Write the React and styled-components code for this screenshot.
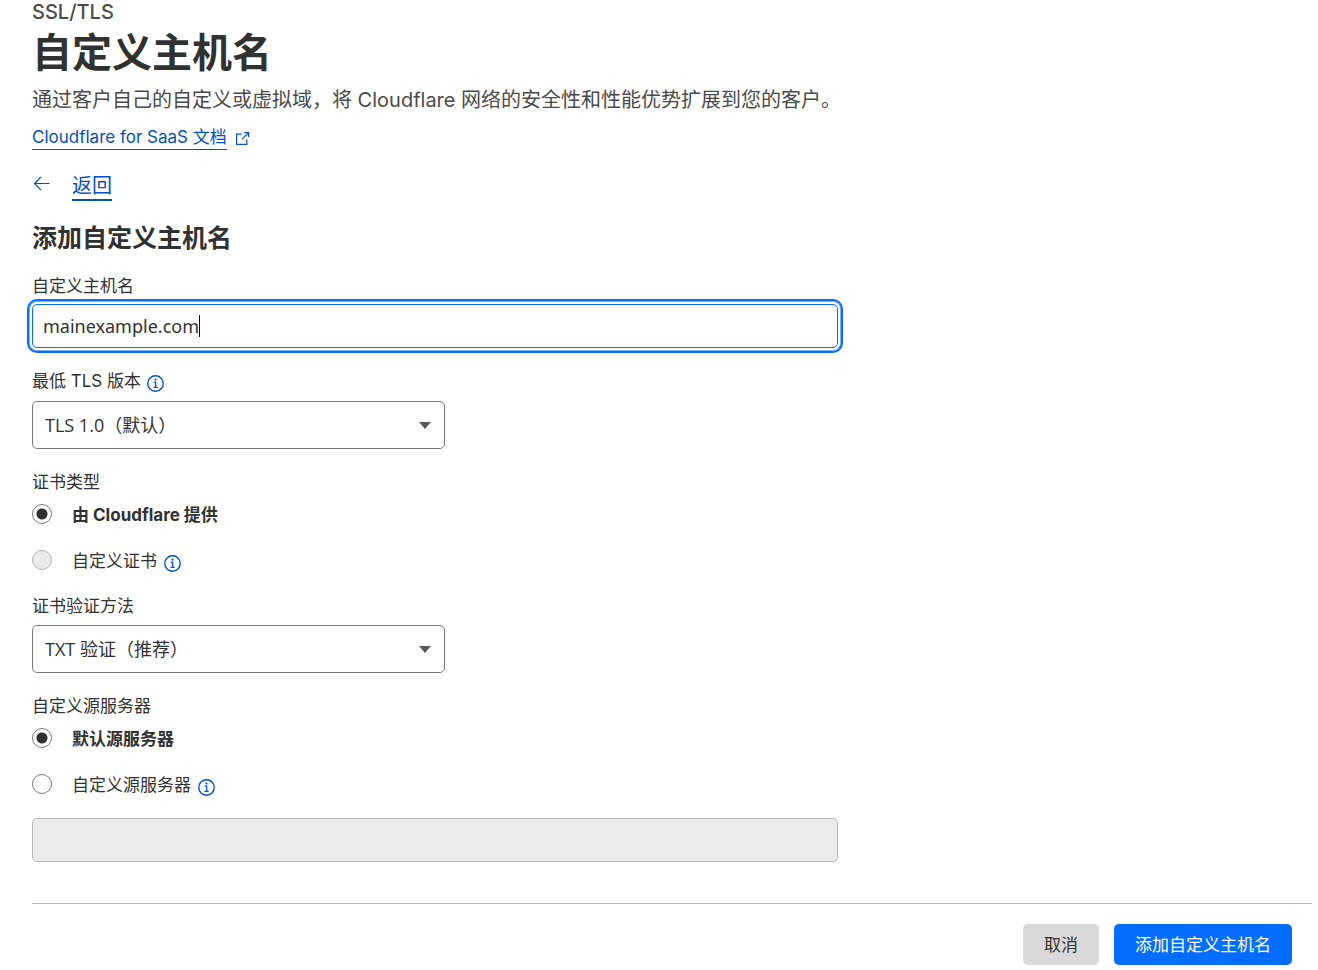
import React, { useState } from 'react';
import styled, { createGlobalStyle } from 'styled-components';

const GlobalStyle = createGlobalStyle`
  *, *::before, *::after {
    box-sizing: border-box;
  }

  body {
    margin: 0;
    background-color: #fff;
    color: #313131;
    font-family: Inter, "Noto Sans CJK SC", sans-serif;
    font-size: 17px;
    line-height: 24px;
  }

  button, input, select {
    font: inherit;
    color: inherit;
  }
`;

const Page = styled.main`
  padding: 0 6px 4px 32px;
`;

const Header = styled.header`
  color: #4a4a4a;
`;

const Section = styled.div`
  font-size: 20px;
  font-weight: 500;
  line-height: 24px;
`;

const Title = styled.h1`
  margin: 4px 0 7px;
  color: #313131;
  font-size: 40px;
  font-weight: 700;
  line-height: 50px;
`;

const Description = styled.p`
  margin: 0 0 11px;
  font-size: 20px;
  line-height: 30px;
`;

const DocsRow = styled.div`
  display: flex;
  align-items: center;
  gap: 8px;
  color: #0051c3;
`;

const DocsLink = styled.a`
  border-bottom: 1px solid #0051c3;
  color: #0051c3;
  line-height: 23px;
  text-decoration: none;
`;

const BackRow = styled.div`
  display: flex;
  align-items: flex-start;
  gap: 20px;
  margin-top: 24px;
  color: #0051c3;
`;

const BackLink = styled.a`
  border-bottom: 2px solid #0051c3;
  color: #0051c3;
  font-size: 20px;
  line-height: 25px;
  text-decoration: none;
`;

const FormTitle = styled.h2`
  margin: 21px 0 20px;
  font-size: 25px;
  font-weight: 700;
  line-height: 32px;
`;

const Fields = styled.div`
  width: 63%;
`;

const Field = styled.div`
  margin-bottom: 21px;
`;

const LabelRow = styled.div`
  display: flex;
  align-items: center;
  gap: 6px;
  margin-bottom: ${(props) => props.$gap || 7}px;
`;

const Group = styled.fieldset`
  margin: 0 0 21px;
  padding: 0;
  border: 0;
  min-width: 0;

  legend {
    margin-bottom: 9px;
    padding: 0;
  }
`;

const InputBox = styled.div`
  position: relative;
`;

const TextInput = styled.input`
  display: block;
  width: 100%;
  height: 44px;
  padding: 0 10px;
  border: 1px solid #797979;
  border-radius: 5px;
  background-color: #fff;
  font-family: "Noto Sans", "Noto Sans CJK SC", sans-serif;
  font-size: 18px;
  outline: none;
  caret-color: transparent;

  &:focus {
    border-color: #056dff;
    box-shadow: 0 0 0 2px #fff, 0 0 0 3px #82b6ff, 0 0 0 5px #056dff;
  }

  &:disabled {
    border-color: #b6b6b6;
    background-color: #ebebeb;
  }
`;

/* The hidden copy of the value pushes the caret to the end of the text. */
const Caret = styled.span`
  position: absolute;
  top: 11px;
  left: 11px;
  height: 22px;
  border-right: 1px solid #000;
  color: transparent;
  font-family: "Noto Sans", "Noto Sans CJK SC", sans-serif;
  font-size: 18px;
  line-height: 22px;
  pointer-events: none;
`;

const SelectBox = styled.div`
  position: relative;
  max-width: 413px;

  svg {
    position: absolute;
    top: 21px;
    right: 14px;
    pointer-events: none;
  }
`;

const Select = styled.select`
  appearance: none;
  display: block;
  width: 100%;
  height: 48px;
  padding: 0 40px 0 12px;
  border: 1px solid #797979;
  border-radius: 5px;
  background-color: #fff;
  font-family: "Open Sans", "Noto Sans CJK SC", sans-serif;
  font-size: 18px;
`;

const RadioRow = styled.div`
  display: flex;
  align-items: center;
  margin-bottom: ${(props) => (props.$last ? 0 : 22)}px;

  label {
    margin: 0 7px 0 20px;
    font-weight: ${(props) => (props.$checked ? 700 : 400)};
  }
`;

const Radio = styled.input`
  appearance: none;
  flex: none;
  width: 20px;
  height: 20px;
  margin: 0 0 3px;
  border: 1px solid #797979;
  border-radius: 50%;
  background-color: #fff;

  &:checked {
    background-image: radial-gradient(circle, #313131 5px, transparent 6px);
  }

  &:disabled {
    border-color: #b6b6b6;
    background-color: #ebebeb;
  }
`;

const Footer = styled.footer`
  display: flex;
  justify-content: flex-end;
  gap: 15px;
  margin-top: 41px;
  padding: 20px 20px 0;
  border-top: 1px solid #b6b6b6;
`;

const Button = styled.button`
  height: 41px;
  padding: 0 21px;
  border: 0;
  border-radius: 5px;
  background-color: ${(props) => (props.$primary ? '#056dff' : '#d9d9d9')};
  color: ${(props) => (props.$primary ? '#fff' : '#313131')};
`;

const InfoMark = styled.svg`
  flex: none;
  margin-top: 4px;
  color: #0051c3;
`;

const InfoIcon = () => (
  <InfoMark width="17" height="17" viewBox="0 0 16 16" fill="none" stroke="currentColor" role="img" aria-label="info">
    <circle cx="8" cy="8" r="7.3" strokeWidth="1.3" />
    <path d="M6.3 6.6h1.9v4.9M6.1 11.6h4" strokeWidth="1.2" />
    <circle cx="8" cy="4.3" r="1" fill="currentColor" stroke="none" />
  </InfoMark>
);

const ExternalIcon = () => (
  <svg width="15" height="15" viewBox="0 0 15 15" fill="none" stroke="currentColor" strokeWidth="1.2" aria-hidden="true">
    <path d="M6.7 3.2H1.6v10.2h10.2V8.4" />
    <path d="M9.2 1.6h4.4v4.4M13.4 1.8L6.8 8.4" />
  </svg>
);

const ArrowLeft = () => (
  <svg width="20" height="20" viewBox="0 0 20 20" fill="none" stroke="currentColor" strokeWidth="1.2" aria-hidden="true">
    <path d="M2.5 9.5h15M9 3L2.5 9.5L9 16" />
  </svg>
);

const Triangle = () => (
  <svg width="12" height="7" viewBox="0 0 12 7" aria-hidden="true">
    <path d="M0 0h12L6 7z" fill="#595959" />
  </svg>
);

const App = () => {
  const [hostname, setHostname] = useState('mainexample.com');
  const [focused, setFocused] = useState(true);
  const [origin, setOrigin] = useState('default');
  const [originServer, setOriginServer] = useState('');

  return (
    <>
      <GlobalStyle />
      <Page>
        <Header>
          <Section>SSL/TLS</Section>
          <Title>自定义主机名</Title>
          <Description>通过客户自己的自定义或虚拟域，将 Cloudflare 网络的安全性和性能优势扩展到您的客户。</Description>
          <DocsRow>
            <DocsLink href="#docs">Cloudflare for SaaS 文档</DocsLink>
            <ExternalIcon />
          </DocsRow>
        </Header>
        <BackRow>
          <ArrowLeft />
          <BackLink href="#back">返回</BackLink>
        </BackRow>
        <form onSubmit={(e) => e.preventDefault()}>
          <FormTitle>添加自定义主机名</FormTitle>
          <Fields>
            <Field>
              <LabelRow $gap={6}>
                <label htmlFor="hostname">自定义主机名</label>
              </LabelRow>
              <InputBox>
                <TextInput
                  id="hostname"
                  type="text"
                  autoFocus
                  value={hostname}
                  onChange={(e) => setHostname(e.target.value)}
                  onFocus={() => setFocused(true)}
                  onBlur={() => setFocused(false)}
                />
                {focused && <Caret aria-hidden="true">{hostname}</Caret>}
              </InputBox>
            </Field>
            <Field>
              <LabelRow $gap={8}>
                <label htmlFor="tls">最低 TLS 版本</label>
                <InfoIcon />
              </LabelRow>
              <SelectBox>
                <Select id="tls" defaultValue="1.0">
                  <option value="1.0">TLS 1.0（默认）</option>
                </Select>
                <Triangle />
              </SelectBox>
            </Field>
            <Group>
              <legend>证书类型</legend>
              <RadioRow $checked>
                <Radio type="radio" name="cert" id="cert-cf" defaultChecked />
                <label htmlFor="cert-cf">由 Cloudflare 提供</label>
              </RadioRow>
              <RadioRow $last>
                <Radio type="radio" name="cert" id="cert-custom" disabled />
                <label htmlFor="cert-custom">自定义证书</label>
                <InfoIcon />
              </RadioRow>
            </Group>
            <Field>
              <LabelRow>
                <label htmlFor="validation">证书验证方法</label>
              </LabelRow>
              <SelectBox>
                <Select id="validation" defaultValue="txt">
                  <option value="txt">TXT 验证（推荐）</option>
                </Select>
                <Triangle />
              </SelectBox>
            </Field>
            <Group>
              <legend>自定义源服务器</legend>
              <RadioRow $checked={origin === 'default'}>
                <Radio
                  type="radio"
                  name="origin"
                  id="origin-default"
                  checked={origin === 'default'}
                  onChange={() => setOrigin('default')}
                />
                <label htmlFor="origin-default">默认源服务器</label>
              </RadioRow>
              <RadioRow $last $checked={origin === 'custom'}>
                <Radio
                  type="radio"
                  name="origin"
                  id="origin-custom"
                  checked={origin === 'custom'}
                  onChange={() => setOrigin('custom')}
                />
                <label htmlFor="origin-custom">自定义源服务器</label>
                <InfoIcon />
              </RadioRow>
            </Group>
            <TextInput
              type="text"
              aria-label="自定义源服务器"
              disabled={origin === 'default'}
              value={originServer}
              onChange={(e) => setOriginServer(e.target.value)}
            />
          </Fields>
          <Footer>
            <Button type="button">取消</Button>
            <Button type="submit" $primary>添加自定义主机名</Button>
          </Footer>
        </form>
      </Page>
    </>
  );
};

export default App;
